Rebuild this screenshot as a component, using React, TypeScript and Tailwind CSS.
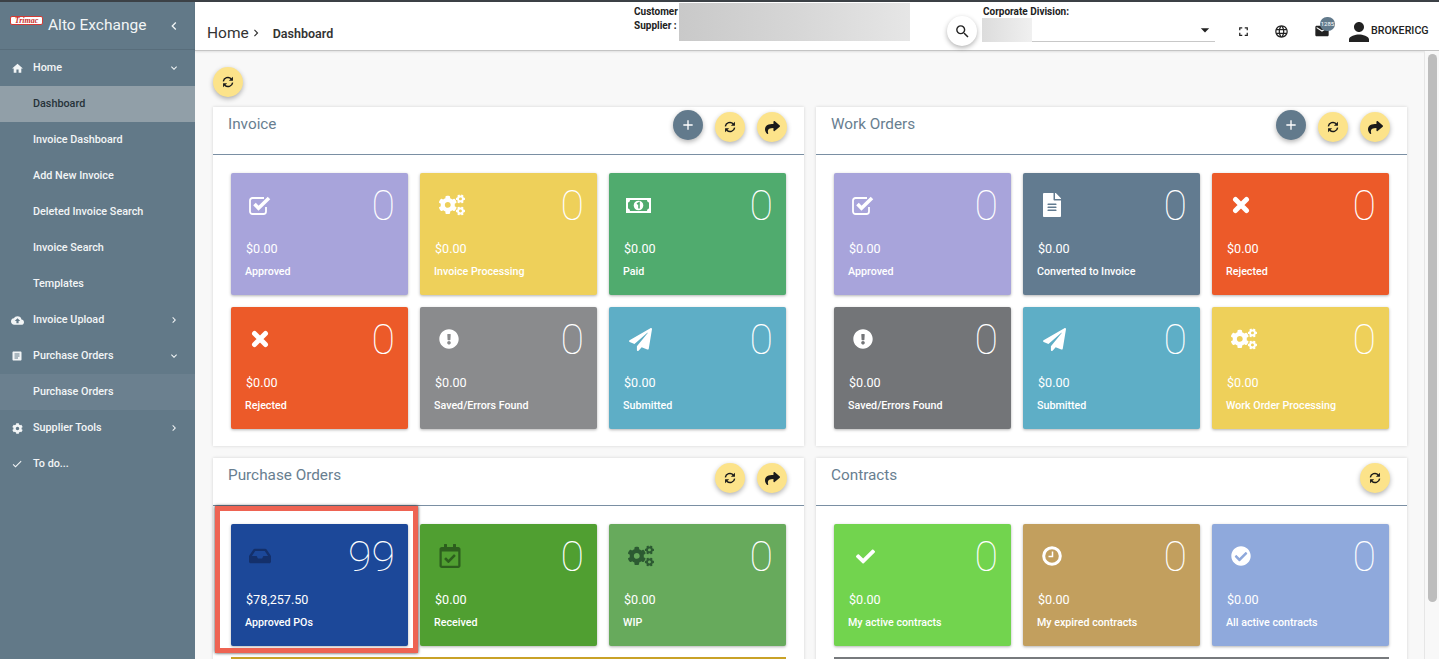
import type { ReactNode } from "react"
import {
  FaCheck,
  FaCheckCircle,
  FaCog,
  FaCogs,
  FaExclamationCircle,
  FaFileAlt,
  FaInbox,
  FaPaperPlane,
  FaRegCalendarCheck,
  FaShare,
} from "react-icons/fa"
import {
  MdAdd,
  MdArrowDropDown,
  MdArticle,
  MdCheck,
  MdChevronLeft,
  MdChevronRight,
  MdCloudUpload,
  MdExpandMore,
  MdFullscreen,
  MdHome,
  MdLanguage,
  MdMarkunread,
  MdPerson,
  MdSearch,
} from "react-icons/md"

interface Tile {
  icon: ReactNode
  count: string
  amount: string
  label: string
  bg: string
}

function RefreshIcon() {
  return (
    <svg width="14" height="14" viewBox="0 0 24 24" fill="none" stroke="currentColor" strokeWidth="2.4">
      <path d="M4 11a8 8 0 0 1 13.5-4.5" />
      <path d="M20 13a8 8 0 0 1-13.5 4.5" />
      <path d="M20.5 3v7h-7z" fill="currentColor" stroke="none" />
      <path d="M3.5 21v-7h7z" fill="currentColor" stroke="none" />
    </svg>
  )
}

function CheckSquareIcon() {
  return (
    <svg width="22" height="19" viewBox="0 0 22 19" fill="none" stroke="currentColor">
      <path d="M15 2H3.500A2.500 2.500 0 0 0 1 4.500V15.500A2.500 2.500 0 0 0 3.500 18h11a2.500 2.500 0 0 0 2.500-2.500V11" strokeWidth="1.800" />
      <path d="M5.500 8l4 4.200L20 2" strokeWidth="3.600" />
    </svg>
  )
}

function BillIcon() {
  return (
    <svg width="25" height="15" viewBox="0 0 25 15">
      <path d="M0 0h25v15H0z" fill="#ffffff" />
      <path d="M4 2h17c0 1.500 1 2.500 2 2.500v6c-1 0-2 1-2 2.500H4c0-1.500-1-2.500-2-2.500v-6C3 4.500 4 3.500 4 2z" fill="#50ab6e" />
      <circle cx="12.500" cy="7.500" r="4.800" fill="#ffffff" />
      <path d="M11 6l2-1.200V10.500" fill="none" stroke="#50ab6e" strokeWidth="1.600" />
    </svg>
  )
}

function CrossIcon() {
  return (
    <svg width="18" height="18" viewBox="0 0 18 18" stroke="currentColor" strokeWidth="5" strokeLinecap="round">
      <path d="M3.500 3.500l11 11M14.500 3.500l-11 11" />
    </svg>
  )
}

function ClockIcon() {
  return (
    <svg width="20" height="20" viewBox="0 0 20 20" fill="none" stroke="currentColor">
      <circle cx="10" cy="10" r="8.300" strokeWidth="3" />
      <path d="M10.500 5.500v5H6.500" strokeWidth="1.500" />
    </svg>
  )
}

const invoiceTiles: Tile[] = [
  { icon: <CheckSquareIcon />, count: "0", amount: "$0.00", label: "Approved", bg: "bg-[#a8a4db]" },
  { icon: <FaCogs size={26} className="ml-[6px] shrink-0" />, count: "0", amount: "$0.00", label: "Invoice Processing", bg: "bg-[#eed05a]" },
  { icon: <BillIcon />, count: "0", amount: "$0.00", label: "Paid", bg: "bg-[#50ab6e]" },
  { icon: <CrossIcon />, count: "0", amount: "$0.00", label: "Rejected", bg: "bg-[#ec5a29]" },
  { icon: <FaExclamationCircle size={20} />, count: "0", amount: "$0.00", label: "Saved/Errors Found", bg: "bg-[#8a8b8d]" },
  { icon: <FaPaperPlane size={23} className="ml-[4px] shrink-0" />, count: "0", amount: "$0.00", label: "Submitted", bg: "bg-[#5eaec6]" },
]

const workOrderTiles: Tile[] = [
  { icon: <CheckSquareIcon />, count: "0", amount: "$0.00", label: "Approved", bg: "bg-[#a8a4db]" },
  { icon: <FaFileAlt size={24} />, count: "0", amount: "$0.00", label: "Converted to Invoice", bg: "bg-[#627b90]" },
  { icon: <CrossIcon />, count: "0", amount: "$0.00", label: "Rejected", bg: "bg-[#ec5a29]" },
  { icon: <FaExclamationCircle size={20} />, count: "0", amount: "$0.00", label: "Saved/Errors Found", bg: "bg-[#737578]" },
  { icon: <FaPaperPlane size={23} className="ml-[4px] shrink-0" />, count: "0", amount: "$0.00", label: "Submitted", bg: "bg-[#5eaec6]" },
  { icon: <FaCogs size={26} className="ml-[6px] shrink-0" />, count: "0", amount: "$0.00", label: "Work Order Processing", bg: "bg-[#eed05a]" },
]

const purchaseTiles: Tile[] = [
  { icon: <FaInbox size={22} className="text-[#14306b]" />, count: "99", amount: "$78,257.50", label: "Approved POs", bg: "bg-[#1c4899]" },
  { icon: <FaRegCalendarCheck size={24} className="ml-[2px] shrink-0 text-[#2d5f1e]" />, count: "0", amount: "$0.00", label: "Received", bg: "bg-[#509f31]" },
  { icon: <FaCogs size={26} className="ml-[6px] shrink-0 text-[#2c5a32]" />, count: "0", amount: "$0.00", label: "WIP", bg: "bg-[#67aa5c]" },
]

const contractTiles: Tile[] = [
  { icon: <FaCheck size={19} className="ml-[4px] shrink-0" />, count: "0", amount: "$0.00", label: "My active contracts", bg: "bg-[#72d44e]" },
  { icon: <ClockIcon />, count: "0", amount: "$0.00", label: "My expired contracts", bg: "bg-[#c29f5e]" },
  { icon: <FaCheckCircle size={20} />, count: "0", amount: "$0.00", label: "All active contracts", bg: "bg-[#8fa9dc]" },
]

function Round({ children, dark, up }: { children: ReactNode; dark?: boolean; up?: boolean }) {
  return (
    <button
      className={`flex h-[30px] w-[30px] items-center justify-center rounded-full shadow-[0_2px_5px_rgba(0,0,0,0.3)] ${
        dark ? "bg-[#627a8c] text-white" : "bg-[#fce38a] text-[#1a1a1a]"
      } ${up ? "mt-[-2px]" : ""}`}
    >
      {children}
    </button>
  )
}

function TileCard({ tile, marked }: { tile: Tile; marked?: boolean }) {
  return (
    <div className={`relative h-[122px] rounded-[2px] text-white shadow-[0_1px_3px_rgba(0,0,0,0.3)] ${tile.bg}`}>
      {marked && (
        <div className="absolute top-[-18px] right-[-10px] bottom-[-7px] left-[-16px] border-[5px] border-[#ee6352] shadow-[0_0_3px_rgba(0,0,0,0.8)]" />
      )}
      <div className="flex h-[64px] items-start justify-between pr-[13px] pl-[16px]">
        <div className="mt-[20px] flex h-[24px] w-[26px] items-center justify-center">{tile.icon}</div>
        <div className="mt-[7px] text-[43px] leading-[50px] font-thin">{tile.count}</div>
      </div>
      <div className="mt-[4px] pl-[15px] text-[12.6px] leading-[15px] font-normal">{tile.amount}</div>
      <div className="mt-[8px] pl-[14px] text-[10.7px] leading-[15px] font-medium">{tile.label}</div>
    </div>
  )
}

function Panel({
  title,
  tiles,
  actions,
  nextRow,
  markFirst,
}: {
  title: string
  tiles: Tile[]
  actions: ReactNode
  nextRow?: string
  markFirst?: boolean
}) {
  return (
    <section className="bg-white shadow-[0_0_3px_rgba(0,0,0,0.15)]">
      <div className="flex h-[48px] justify-between border-b border-[#7a8fa3] pr-[17px] pl-[15px]">
        <h2 className="pt-[6px] text-[15.3px] leading-[22px] text-[#687e90]">{title}</h2>
        <div className="flex items-start gap-[12px] pt-[5px]">{actions}</div>
      </div>
      <div className="grid grid-cols-3 gap-[12px] px-[18px] pt-[18px] pb-[17px]">
        {tiles.map((tile, i) => (
          <TileCard key={tile.label} tile={tile} marked={markFirst && i === 0} />
        ))}
        {nextRow && <div className={`col-span-3 mt-[-1px] h-[122px] ${nextRow}`} />}
      </div>
    </section>
  )
}

function NavItem({
  icon,
  label,
  caret,
  className = "",
}: {
  icon?: ReactNode
  label: string
  caret?: "down" | "right"
  className?: string
}) {
  return (
    <div className={`flex h-[36px] items-center text-[10.8px] font-medium ${className}`}>
      <div className="flex w-[33px] justify-center pl-[1px]">{icon}</div>
      <span className="flex-1">{label}</span>
      {caret === "down" && <MdExpandMore size={12} className="mr-[15px]" />}
      {caret === "right" && <MdChevronRight size={12} className="mr-[15px]" />}
    </div>
  )
}

export default function App() {
  return (
    <div className="flex h-[659px] w-[1439px] flex-col overflow-hidden bg-[#f8f8f8] font-['Roboto',sans-serif]">
      <div className="h-[2px] bg-[#3c4146]" />
      <div className="flex min-h-0 flex-1">
        {/* Sidebar */}
        <aside className="w-[195px] shrink-0 bg-[#627988] text-[#f2f5f6]">
          <div className="flex h-[48px] items-center border-b border-[#586d7b] pl-[10px]">
            <div className="mb-[10px] flex h-[9px] w-[33px] items-center justify-center rounded-[2px] border border-[#d43a34] bg-white font-['Liberation_Serif',serif] text-[8px] leading-none font-bold text-[#c9302c] italic">
              Trimac
            </div>
            <span className="mt-[1px] ml-[5px] flex-1 text-[15.5px]">Alto Exchange</span>
            <MdChevronLeft size={16} className="mr-[13px]" />
          </div>
          <NavItem icon={<MdHome size={13} />} label="Home" caret="down" />
          <NavItem label="Dashboard" className="bg-[#919fa8] text-[#263238]" />
          <NavItem label="Invoice Dashboard" />
          <NavItem label="Add New Invoice" />
          <NavItem label="Deleted Invoice Search" />
          <NavItem label="Invoice Search" />
          <NavItem label="Templates" />
          <NavItem icon={<MdCloudUpload size={13} />} label="Invoice Upload" caret="right" />
          <NavItem icon={<MdArticle size={12} />} label="Purchase Orders" caret="down" />
          <NavItem label="Purchase Orders" className="bg-[#6b808f]" />
          <NavItem icon={<FaCog size={11} />} label="Supplier Tools" caret="right" />
          <NavItem icon={<MdCheck size={12} />} label="To do..." />
        </aside>

        <div className="flex min-w-0 flex-1 flex-col">
          {/* Header */}
          <header className="flex h-[49px] shrink-0 items-center border-b border-[#c4c4c4] bg-white shadow-[0_1px_2px_rgba(0,0,0,0.1)]">
            <div className="mt-[14px] ml-[12px] flex w-[427px] items-center text-[#333]">
              <span className="text-[15.5px] leading-[20px]">Home</span>
              <MdChevronRight size={14} />
              <span className="mt-[1px] ml-[10px] text-[12.5px] leading-[20px] font-semibold">Dashboard</span>
            </div>
            <div className="mb-[15px] w-[45px] text-[10px] leading-[14px] font-bold text-[#222]">
              <div>Customer</div>
              <div>Supplier :</div>
            </div>
            <div className="mb-[9px] h-[38px] w-[231px] bg-gradient-to-r from-[#c9c9c9] via-[#d6d6d6] to-[#e6e6e6]" />
            <button className="mt-[10px] ml-[37px] flex h-[30px] w-[30px] items-center justify-center rounded-full bg-white shadow-[0_2px_5px_rgba(0,0,0,0.3)]">
              <MdSearch size={17} className="text-[#222]" />
            </button>
            <div className="mb-[3px] ml-[5px] w-[233px]">
              <div className="mb-[1px] pl-[1px] text-[10px] leading-[10px] font-bold text-[#222]">Corporate Division:</div>
              <div className="flex h-[24px] items-center justify-between border-b border-[#c8c8c8]">
                <div className="h-[24px] w-[50px] bg-gradient-to-r from-[#dcdcdc] to-[#f0f0f0]" />
                <MdArrowDropDown size={20} className="text-[#222]" />
              </div>
            </div>
            <MdFullscreen size={15} className="mt-[10px] ml-[21px] text-[#222]" />
            <MdLanguage size={15} className="mt-[10px] ml-[23px] text-[#222]" />
            <div className="relative mt-[9px] ml-[25px]">
              <MdMarkunread size={16} className="text-[#222]" />
              <span className="absolute top-[-6px] left-[6px] flex h-[14px] w-[15px] items-center justify-center rounded-full bg-[#627a8c] text-[6px] text-white">
                1285
              </span>
            </div>
            <MdPerson size={30} className="mt-[11px] ml-[14px] text-[#222]" />
            <span className="mt-[10px] ml-[-3px] text-[10.7px] font-medium text-[#222]">BROKERICG</span>
          </header>

          <div className="flex min-h-0 flex-1">
            {/* Dashboard content */}
            <main className="min-w-0 flex-1 overflow-hidden pt-[16px] pr-[17px] pl-[18px]">
              <Round>
                <RefreshIcon />
              </Round>
              <div className="mt-[10px] grid grid-cols-2 gap-x-[12px] gap-y-[12px]">
                <Panel
                  title="Invoice"
                  tiles={invoiceTiles}
                  actions={
                    <>
                      <Round dark up>
                        <MdAdd size={16} />
                      </Round>
                      <Round>
                        <RefreshIcon />
                      </Round>
                      <Round>
                        <FaShare size={15} />
                      </Round>
                    </>
                  }
                />
                <Panel
                  title="Work Orders"
                  tiles={workOrderTiles}
                  actions={
                    <>
                      <Round dark up>
                        <MdAdd size={16} />
                      </Round>
                      <Round>
                        <RefreshIcon />
                      </Round>
                      <Round>
                        <FaShare size={15} />
                      </Round>
                    </>
                  }
                />
                <Panel
                  title="Purchase Orders"
                  tiles={purchaseTiles}
                  markFirst
                  nextRow="bg-[#c9a227]"
                  actions={
                    <>
                      <Round>
                        <RefreshIcon />
                      </Round>
                      <Round>
                        <FaShare size={15} />
                      </Round>
                    </>
                  }
                />
                <Panel
                  title="Contracts"
                  tiles={contractTiles}
                  nextRow="bg-[#777a7d]"
                  actions={
                    <Round>
                      <RefreshIcon />
                    </Round>
                  }
                />
              </div>
            </main>

            {/* Scrollbar */}
            <div className="w-[15px] shrink-0 border-l border-[#e6e6e6] bg-[#f8f8f8] pt-[3px] pl-[3px]">
              <div className="h-[548px] w-[9px] rounded-full bg-[#bdbdbd]" />
            </div>
          </div>
        </div>
      </div>
    </div>
  )
}
